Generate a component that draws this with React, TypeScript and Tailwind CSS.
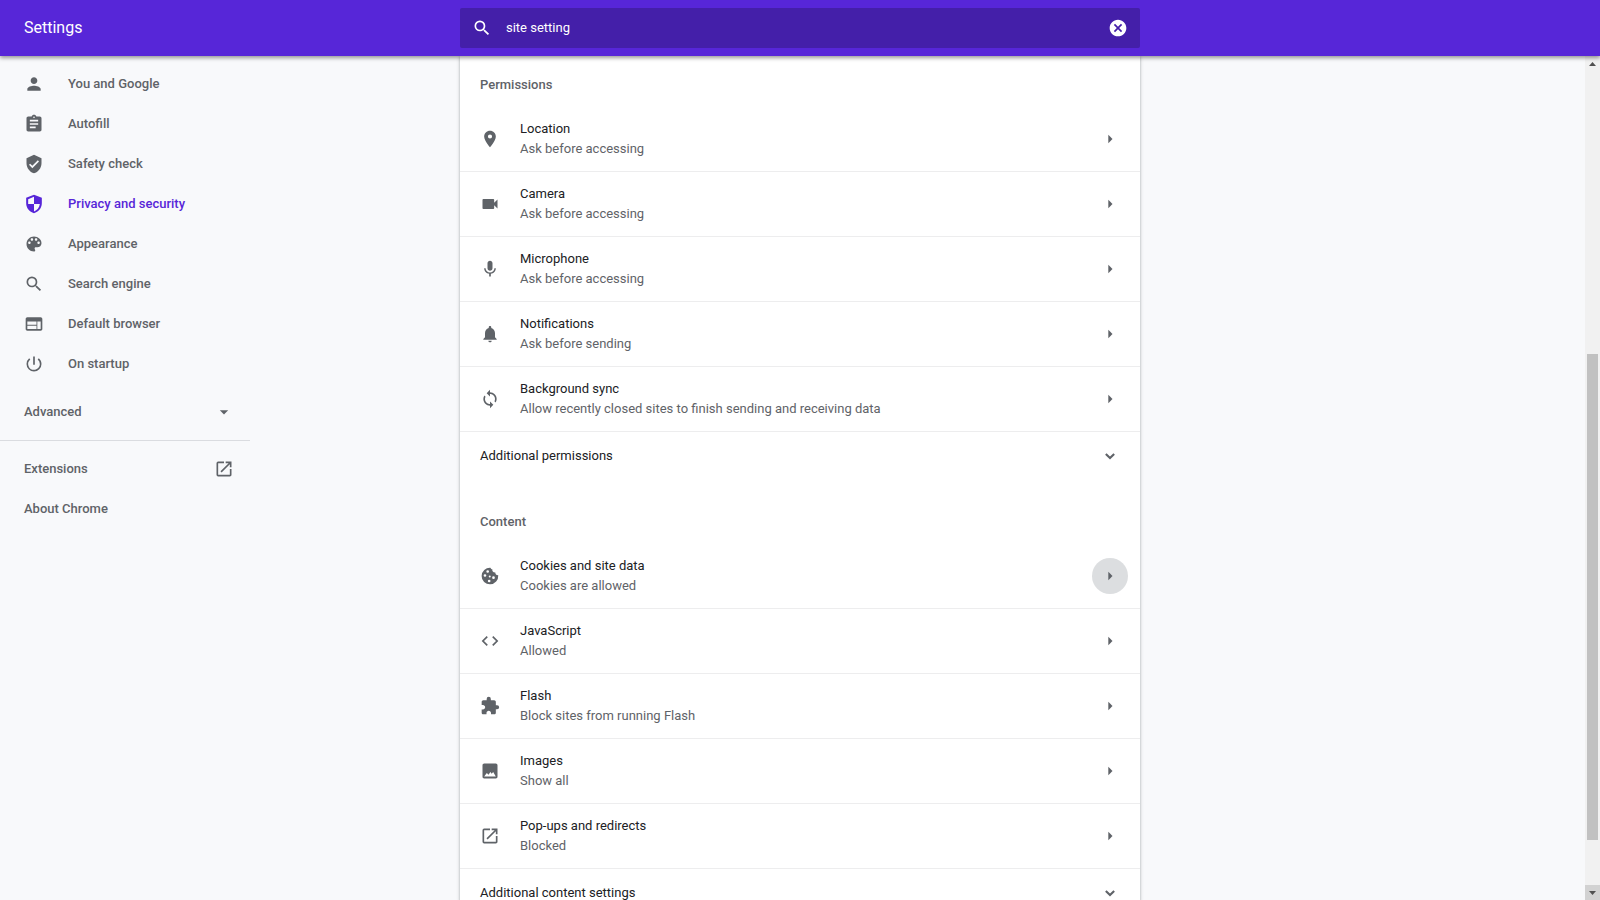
import React, { useState } from 'react';
import {
  MdArrowDropDown,
  MdArrowRight,
  MdAssignment,
  MdCancel,
  MdCode,
  MdExtension,
  MdLocationOn,
  MdMic,
  MdNotifications,
  MdOpenInNew,
  MdPerson,
  MdPowerSettingsNew,
  MdSearch,
  MdSync,
  MdVerifiedUser,
  MdVideocam,
  MdWeb,
} from 'react-icons/md';

type IconType = React.ComponentType<{ className?: string }>;

interface NavItem {
  label: string;
  icon: IconType;
  active?: boolean;
}

interface SettingItem {
  label: string;
  status: string;
  icon: IconType;
  focused?: boolean;
}

const ShieldIcon = ({ className }: { className?: string }) => (
  <svg viewBox="0 0 24 24" fill="currentColor" fillRule="evenodd" className={className}>
    <path d="M12 1 2.6 4.6v6.6C2.6 16.8 6.6 21.700 12 23c5.400-1.300 9.400-6.200 9.400-11.800V4.600L12 1zM5 6.300l7-2.900V12H5V6.300zM12 12h7c-.530 4.120-3.280 7.790-7 8.940V12z" />
  </svg>
);

const PaletteIcon = ({ className }: { className?: string }) => (
  <svg viewBox="0 0 24 24" fill="currentColor" className={className}>
    <path d="M12 3c-4.97 0-9 4.03-9 9s4.03 9 9 9c.83 0 1.5-.67 1.5-1.5 0-.39-.15-.74-.39-1.01-.23-.26-.38-.61-.38-.99 0-.83.67-1.5 1.5-1.5H16c2.76 0 5-2.24 5-5 0-4.42-4.03-8-9-8zm-5.5 9c-.83 0-1.5-.67-1.5-1.5S5.67 9 6.5 9 8 9.67 8 10.5 7.33 12 6.5 12zm3-4C8.67 8 8 7.33 8 6.5S8.67 5 9.5 5s1.5.67 1.5 1.5S10.33 8 9.5 8zm5 0c-.83 0-1.5-.67-1.5-1.5S13.67 5 14.5 5s1.5.67 1.5 1.5S15.33 8 14.5 8zm3 4c-.83 0-1.5-.67-1.5-1.5S16.67 9 17.5 9s1.5.67 1.5 1.5-.67 1.5-1.5 1.5z" />
  </svg>
);

const CookieIcon = ({ className }: { className?: string }) => (
  <svg viewBox="0 0 24 24" fill="currentColor" fillRule="evenodd" className={className}>
    <path d="M21.9 11.2c-2.2.1-3.7-1.3-3.5-3.3-2.5.2-4.1-1.6-3.6-3.9-1.3-.2-2-1-2.3-2A10 10 0 1 0 21.9 11.2zM9.200 5a1.6 1.6 0 1 1 0 3.2 1.6 1.6 0 0 1 0-3.2zM6 9.800a1.6 1.6 0 1 1 0 3.200 1.6 1.6 0 0 1 0-3.200zm5.700 1.700a1.2 1.2 0 1 1 0 2.400 1.2 1.2 0 0 1 0-2.400zM16.200 12.400a1.6 1.6 0 1 1 0 3.2 1.6 1.6 0 0 1 0-3.2zM11 16.400a1.6 1.6 0 1 1 0 3.200 1.6 1.6 0 0 1 0-3.200z" />
  </svg>
);

const ImageIcon = ({ className }: { className?: string }) => (
  <svg viewBox="0 0 24 24" fill="currentColor" fillRule="evenodd" className={className}>
    <path d="M21 19V5c0-1.1-.9-2-2-2H5c-1.1 0-2 .9-2 2v14c0 1.1.9 2 2 2h14c1.1 0 2-.9 2-2zM5 18.500l3.200-4.200 2 2.200 2.300-3.200 1.500 2 1.800-2 3.200 5.200z" />
  </svg>
);

const ChevronIcon = ({ className }: { className?: string }) => (
  <svg viewBox="0 0 24 24" fill="none" stroke="currentColor" strokeWidth="2.5" className={className}>
    <path d="m7 9.500 5 5 5-5" />
  </svg>
);

const navItems: NavItem[] = [
  { label: 'You and Google', icon: MdPerson },
  { label: 'Autofill', icon: MdAssignment },
  { label: 'Safety check', icon: MdVerifiedUser },
  { label: 'Privacy and security', icon: ShieldIcon, active: true },
  { label: 'Appearance', icon: PaletteIcon },
  { label: 'Search engine', icon: MdSearch },
  { label: 'Default browser', icon: MdWeb },
  { label: 'On startup', icon: MdPowerSettingsNew },
];

const permissions: SettingItem[] = [
  { label: 'Location', status: 'Ask before accessing', icon: MdLocationOn },
  { label: 'Camera', status: 'Ask before accessing', icon: MdVideocam },
  { label: 'Microphone', status: 'Ask before accessing', icon: MdMic },
  { label: 'Notifications', status: 'Ask before sending', icon: MdNotifications },
  {
    label: 'Background sync',
    status: 'Allow recently closed sites to finish sending and receiving data',
    icon: MdSync,
  },
];

const content: SettingItem[] = [
  { label: 'Cookies and site data', status: 'Cookies are allowed', icon: CookieIcon, focused: true },
  { label: 'JavaScript', status: 'Allowed', icon: MdCode },
  { label: 'Flash', status: 'Block sites from running Flash', icon: MdExtension },
  { label: 'Images', status: 'Show all', icon: ImageIcon },
  { label: 'Pop-ups and redirects', status: 'Blocked', icon: MdOpenInNew },
];

const Header = () => {
  const [query, setQuery] = useState('site setting');

  return (
    <header className="relative z-10 flex h-14 shrink-0 items-center bg-[#5726d8] text-white shadow-[0_2px_4px_rgba(0,0,0,0.4)]">
      <div className="flex-1">
        <h1 className="pl-6 text-base">Settings</h1>
      </div>
      <div className="flex h-10 w-full max-w-[680px] items-center rounded-xs bg-[#441fa9] px-3">
        <label htmlFor="search" aria-label="Search settings">
          <MdSearch className="size-5" />
        </label>
        <input
          id="search"
          type="text"
          value={query}
          onChange={(e) => setQuery(e.target.value)}
          className="ml-3.5 min-w-0 flex-1 bg-transparent outline-none"
        />
        <button type="button" aria-label="Clear search" onClick={() => setQuery('')}>
          <MdCancel className="size-5" />
        </button>
      </div>
      <div className="flex-1" />
    </header>
  );
};

const Sidebar = () => (
  <nav className="w-[250px] pt-2 font-medium text-[#5f6368]">
    {navItems.map(({ label, icon: Icon, active }) => (
      <a
        key={label}
        href="#"
        className={`flex h-10 items-center gap-6 pl-6 ${active ? 'text-[#5726d8]' : ''}`}
      >
        <Icon className="size-5" />
        {label}
      </a>
    ))}
    <button type="button" className="mt-2 flex h-10 w-full items-center justify-between pr-4 pl-6">
      Advanced
      <MdArrowDropDown className="size-5" />
    </button>
    <div className="mt-2 border-t border-[#dadce0]" />
    <a href="#" className="mt-2 flex h-10 items-center justify-between pr-4 pl-6">
      Extensions
      <MdOpenInNew className="size-5" />
    </a>
    <a href="#" className="flex h-10 items-center pl-6">
      About Chrome
    </a>
  </nav>
);

const SettingRow = ({ label, status, icon: Icon, focused }: SettingItem) => (
  <li>
    <button type="button" className="flex h-16 w-full items-center pr-3 pl-5 text-left">
      <Icon className="size-5 text-[#5f6368]" />
      <span className="ml-5 flex-1 leading-5">
        <span className="block">{label}</span>
        <span className="block text-[#5f6368]">{status}</span>
      </span>
      <span
        className={`flex size-9 items-center justify-center rounded-full text-[#5f6368] ${focused ? 'bg-[#dcdee0]' : ''}`}
      >
        <MdArrowRight className="size-5" />
      </span>
    </button>
  </li>
);

const ExpandRow = ({ label }: { label: string }) => (
  <button
    type="button"
    className="flex h-[49px] w-full items-center justify-between border-t border-[#ededee] pr-5 pl-5 text-left"
  >
    {label}
    <ChevronIcon className="size-5 text-[#5f6368]" />
  </button>
);

const SectionTitle = ({ children, first }: { children: React.ReactNode; first?: boolean }) => (
  <h2 className={`px-5 pb-3 leading-5 font-medium text-[#5f6368] ${first ? 'pt-[19px]' : 'pt-8'}`}>
    {children}
  </h2>
);

const Scrollbar = () => (
  <div className="flex w-[15px] flex-col bg-[#f1f1f1]" aria-hidden="true">
    <div className="flex h-[15px] items-center justify-center">
      <svg viewBox="0 0 7 4" className="h-1 w-[7px]" fill="#505050">
        <path d="M3.5 0 7 4H0z" />
      </svg>
    </div>
    <div className="flex flex-1 flex-col px-0.5">
      <div className="grow-[283]" />
      <div className="grow-[486] bg-[#c1c1c1]" />
      <div className="grow-[45]" />
    </div>
    <div className="flex h-[15px] items-center justify-center bg-[#d2d2d2]">
      <svg viewBox="0 0 7 4" className="h-1 w-[7px]" fill="#505050">
        <path d="M0 0h7L3.5 4z" />
      </svg>
    </div>
  </div>
);

export default function App() {
  return (
    <div className="flex h-screen flex-col bg-[#f8f9fb] font-[Roboto,sans-serif] text-[13px] text-[#202124]">
      <Header />
      <div className="flex min-h-0 flex-1 overflow-hidden">
        <div className="flex-1">
          <Sidebar />
        </div>
        <main className="w-full max-w-[680px] bg-white shadow-[0_1px_2px_rgba(60,64,67,0.3),0_1px_3px_1px_rgba(60,64,67,0.15)]">
          <SectionTitle first>Permissions</SectionTitle>
          <ul className="divide-y divide-[#ededee]">
            {permissions.map((item) => (
              <SettingRow key={item.label} {...item} />
            ))}
          </ul>
          <ExpandRow label="Additional permissions" />

          <SectionTitle>Content</SectionTitle>
          <ul className="divide-y divide-[#ededee]">
            {content.map((item) => (
              <SettingRow key={item.label} {...item} />
            ))}
          </ul>
          <ExpandRow label="Additional content settings" />
        </main>
        <div className="flex flex-1 justify-end">
          <Scrollbar />
        </div>
      </div>
    </div>
  );
}
